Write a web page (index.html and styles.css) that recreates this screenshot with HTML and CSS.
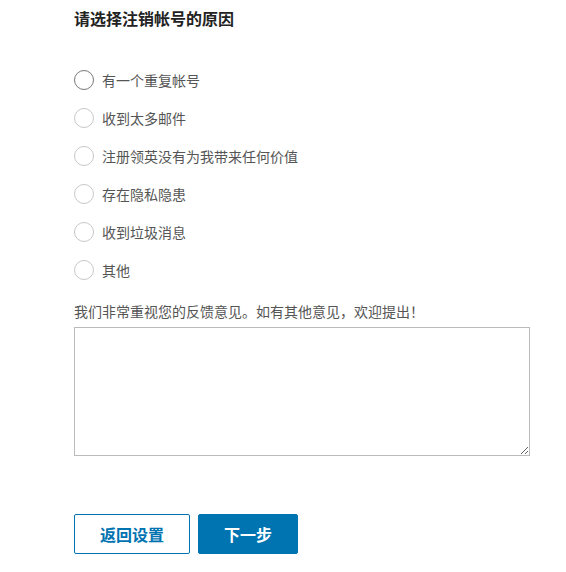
FILE: index.html
```html
<!DOCTYPE html>
<html lang="zh-CN">
<head>
<meta charset="utf-8">
<link rel="stylesheet" href="styles.css">
</head>
<body>
<div class="page">
  <h1 class="title">请选择注销帐号的原因</h1>
  <ul class="options">
    <li class="option"><span class="radio radio-focus"></span><span class="label">有一个重复帐号</span></li>
    <li class="option"><span class="radio"></span><span class="label">收到太多邮件</span></li>
    <li class="option"><span class="radio"></span><span class="label">注册领英没有为我带来任何价值</span></li>
    <li class="option"><span class="radio"></span><span class="label">存在隐私隐患</span></li>
    <li class="option"><span class="radio"></span><span class="label">收到垃圾消息</span></li>
    <li class="option"><span class="radio"></span><span class="label">其他</span></li>
  </ul>
  <p class="hint">我们非常重视您的反馈意见。如有其他意见，欢迎提出！</p>
  <textarea class="feedback"></textarea>
  <div class="actions">
    <button class="btn btn-secondary">返回设置</button>
    <button class="btn btn-primary">下一步</button>
  </div>
</div>
</body>
</html>
```

FILE: styles.css
```css
html, body {
  margin: 0;
  padding: 0;
  background: #fff;
}
body {
  font-family: "Noto Sans CJK SC", "Noto Sans", sans-serif;
  color: #555;
}
.page {
  padding: 7px 0 0 74px;
  display: flex;
  flex-direction: column;
  align-items: flex-start;
}
.title {
  margin: 0;
  font-size: 16px;
  line-height: 22px;
  font-weight: 700;
  color: #222;
}
.options {
  list-style: none;
  margin: 41px 0 0 0;
  padding: 0;
  display: flex;
  flex-direction: column;
  gap: 18px;
}
.option {
  display: flex;
  align-items: center;
  height: 20px;
}
.radio {
  box-sizing: border-box;
  width: 20px;
  height: 20px;
  border-radius: 50%;
  border: 1px solid #c8c8c8;
  margin-right: 8px;
  flex: none;
}
.radio-focus {
  border: 1.5px solid #777;
}
.label {
  font-size: 14px;
  line-height: 20px;
  color: #555;
}
.hint {
  margin: 21px 0 0 0;
  font-size: 14px;
  line-height: 20px;
  color: #555;
}
.feedback {
  box-sizing: border-box;
  margin-top: 6px;
  width: 456px;
  height: 129px;
  border: 1px solid #bbb;
  border-radius: 0;
  padding: 4px;
  resize: vertical;
  font-family: inherit;
}
.actions {
  margin-top: 58px;
  display: flex;
  gap: 8px;
}
.btn {
  box-sizing: border-box;
  height: 40px;
  font-family: inherit;
  font-size: 16px;
  font-weight: 700;
  border-radius: 2px;
  cursor: pointer;
}
.btn-secondary {
  width: 116px;
  background: #fff;
  color: #0073b1;
  border: 1px solid #0073b1;
}
.btn-primary {
  width: 100px;
  background: #0073b1;
  color: #fff;
  border: 1px solid #0073b1;
}
```
